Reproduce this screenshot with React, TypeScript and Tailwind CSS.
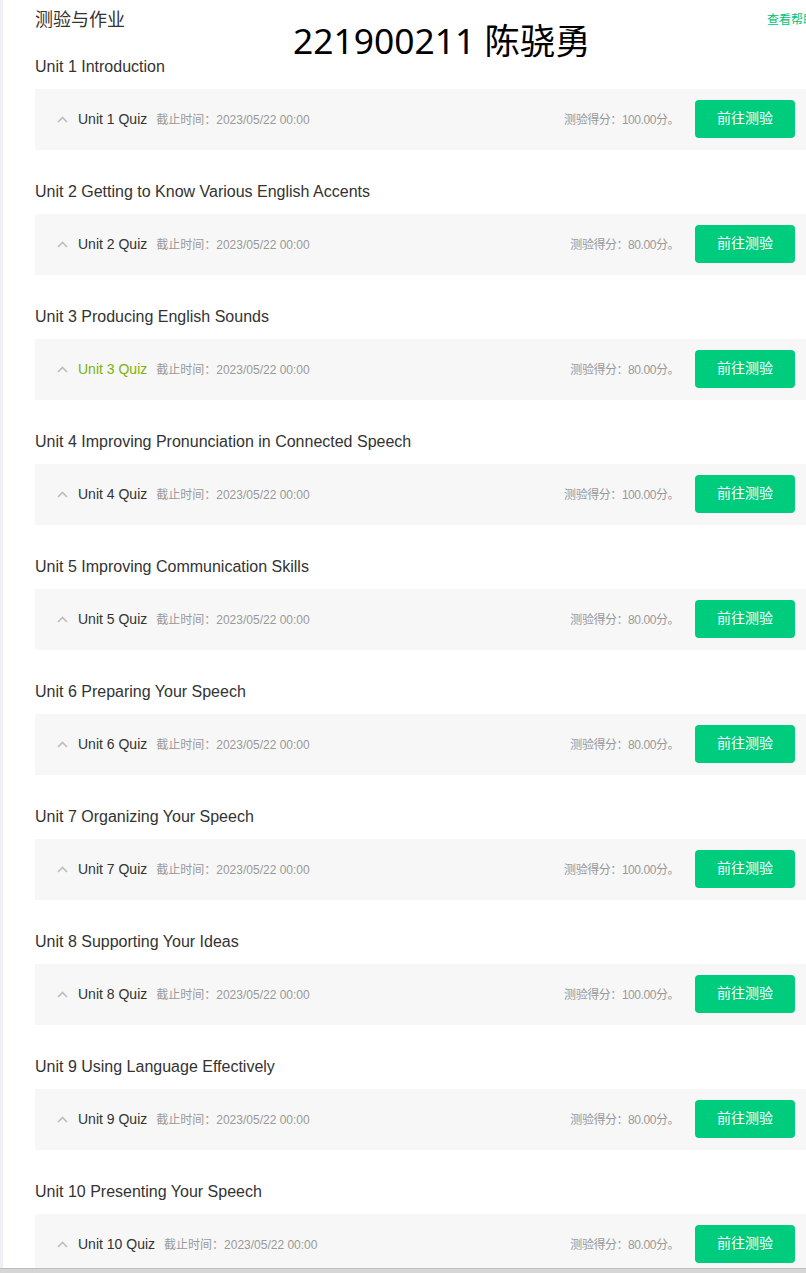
import React from "react";

const units = [
  { title: "Unit 1 Introduction", quiz: "Unit 1 Quiz", score: "100.00" },
  { title: "Unit 2 Getting to Know Various English Accents", quiz: "Unit 2 Quiz", score: "80.00" },
  { title: "Unit 3 Producing English Sounds", quiz: "Unit 3 Quiz", score: "80.00", active: true },
  { title: "Unit 4 Improving Pronunciation in Connected Speech", quiz: "Unit 4 Quiz", score: "100.00" },
  { title: "Unit 5 Improving Communication Skills", quiz: "Unit 5 Quiz", score: "80.00" },
  { title: "Unit 6 Preparing Your Speech", quiz: "Unit 6 Quiz", score: "80.00" },
  { title: "Unit 7 Organizing Your Speech", quiz: "Unit 7 Quiz", score: "100.00" },
  { title: "Unit 8 Supporting Your Ideas", quiz: "Unit 8 Quiz", score: "100.00" },
  { title: "Unit 9 Using Language Effectively", quiz: "Unit 9 Quiz", score: "80.00" },
  { title: "Unit 10 Presenting Your Speech", quiz: "Unit 10 Quiz", score: "80.00" },
];

function Caret() {
  return (
    <svg width="11" height="7" viewBox="0 0 11 7" className="shrink-0">
      <path d="M1 6 L5.5 1.5 L10 6" fill="none" stroke="#bdbdbd" strokeWidth="1.6" />
    </svg>
  );
}

export default function App() {
  return (
    <div
      className="relative h-[1273px] w-[806px] overflow-hidden bg-white flex flex-col"
      style={{ fontFamily: '"Liberation Sans", Arial, "Noto Sans CJK SC", sans-serif' }}
    >
      <div className="flex flex-1 min-h-0 overflow-hidden">
        <div className="w-[3px] shrink-0 bg-[#eef0f4]" />
        <div className="flex-1 min-w-0 pl-[32px] pt-[7px] flex flex-col">
          <div className="flex items-start h-[26px] mb-[21px]">
            <div className="flex-1 text-[18px] leading-[26px] text-[#333]">测验与作业</div>
            <div className="w-[39px] shrink-0 overflow-hidden whitespace-nowrap text-[12px] leading-[26px] text-[#00c27a]">
              查看帮助
            </div>
          </div>
          {units.map((u) => (
            <div key={u.quiz} className="mb-[29px] shrink-0">
              <div className="text-[16px] leading-[23px] pt-[1px] text-[#333] mb-[11px]">{u.title}</div>
              <div className="h-[61px] bg-[#f7f7f7] flex items-center pl-[22px] pr-[11px]">
                <Caret />
                <span
                  className={
                    "ml-[10px] text-[14px] " + (u.active ? "text-[#7cb305]" : "text-[#333]")
                  }
                >
                  {u.quiz}
                </span>
                <span className="ml-[9px] text-[12px] text-[#999]">截止时间：2023/05/22 00:00</span>
                <span className="ml-auto text-[12px] tracking-[-0.45px] text-[#999]">测验得分：{u.score}分。</span>
                <button className="ml-[16px] w-[100px] h-[38px] rounded-[4px] bg-[#00cc7e] text-white text-[14px] -mt-[2px]">
                  前往测验
                </button>
              </div>
            </div>
          ))}
        </div>
      </div>
      <div className="h-[5px] shrink-0 bg-[#d6d6d6] border-t border-[#bdbdbd]" />
      <div
        className="absolute left-[293px] top-[15px] text-[35.4px] leading-[50px] text-black whitespace-nowrap"
        style={{ fontFamily: '"Noto Sans", "Noto Sans CJK SC", sans-serif' }}
      >
        221900211 陈骁勇
      </div>
    </div>
  );
}
